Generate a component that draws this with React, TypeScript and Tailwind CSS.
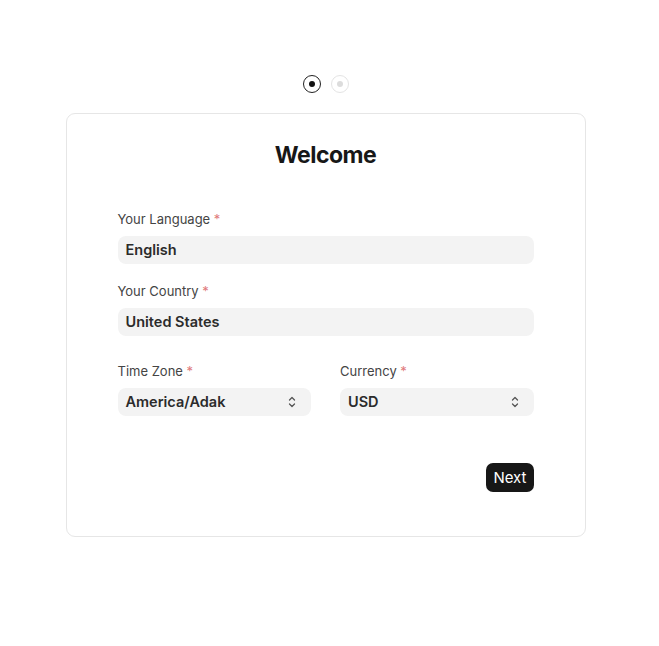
import React from "react";

function Chevrons() {
  return (
    <svg width="10" height="14" viewBox="0 0 10 14" fill="none" stroke="#555" strokeWidth="1.3" strokeLinecap="round" strokeLinejoin="round">
      <path d="M2.5 5 L5 2.5 L7.5 5" />
      <path d="M2.5 9 L5 11.5 L7.5 9" />
    </svg>
  );
}

function Label({ children }: { children: React.ReactNode }) {
  return (
    <div className="text-[13px] leading-[16px] text-[#444] mb-[9px]">
      {children} <span className="text-[#e07a7a]">*</span>
    </div>
  );
}

export default function App() {
  return (
    <div className="w-[659px] h-[646px] bg-white" style={{ fontFamily: "Inter, 'Noto Sans', sans-serif" }}>
      <div className="w-[651px] flex flex-col items-center">
        <div className="flex gap-[10px] mt-[75px]">
          <div className="w-[18px] h-[18px] rounded-full border border-[#222] flex items-center justify-center">
            <div className="w-[6px] h-[6px] rounded-full bg-[#111]" />
          </div>
          <div className="w-[18px] h-[18px] rounded-full border border-[#e4e4e4] flex items-center justify-center">
            <div className="w-[6px] h-[6px] rounded-full bg-[#dcdcdc]" />
          </div>
        </div>
        <div className="mt-[20px] w-[520px] h-[424px] border border-[#e6e6e6] rounded-[9px] px-[51px] pt-[27px] flex flex-col">
          <h1 className="text-center text-[23px] leading-[28px] font-bold text-[#171717] tracking-[-0.5px]">Welcome</h1>
          <div className="mt-[42px]">
            <Label>Your Language</Label>
            <div className="h-[28px] rounded-[8px] bg-[#f3f3f3] px-[8px] flex items-center text-[14.5px] font-semibold text-[#2b2b2b]">English</div>
          </div>
          <div className="mt-[19px]">
            <Label>Your Country</Label>
            <div className="h-[28px] rounded-[8px] bg-[#f3f3f3] px-[8px] flex items-center text-[14.5px] font-semibold text-[#2b2b2b]">United States</div>
          </div>
          <div className="mt-[27px] grid grid-cols-2 gap-[29px]">
            <div>
              <Label>Time Zone</Label>
              <div className="h-[28px] rounded-[8px] bg-[#f3f3f3] pl-[8px] pr-[14px] flex items-center justify-between text-[14.5px] font-semibold text-[#2b2b2b]">
                <span>America/Adak</span>
                <Chevrons />
              </div>
            </div>
            <div>
              <Label>Currency</Label>
              <div className="h-[28px] rounded-[8px] bg-[#f3f3f3] pl-[8px] pr-[14px] flex items-center justify-between text-[14.5px] font-semibold text-[#2b2b2b]">
                <span>USD</span>
                <Chevrons />
              </div>
            </div>
          </div>
          <div className="mt-[47px] flex justify-end">
            <button className="h-[29px] px-[7px] rounded-[7px] bg-[#171717] text-white text-[15px] leading-[29px]">Next</button>
          </div>
        </div>
      </div>
    </div>
  );
}
